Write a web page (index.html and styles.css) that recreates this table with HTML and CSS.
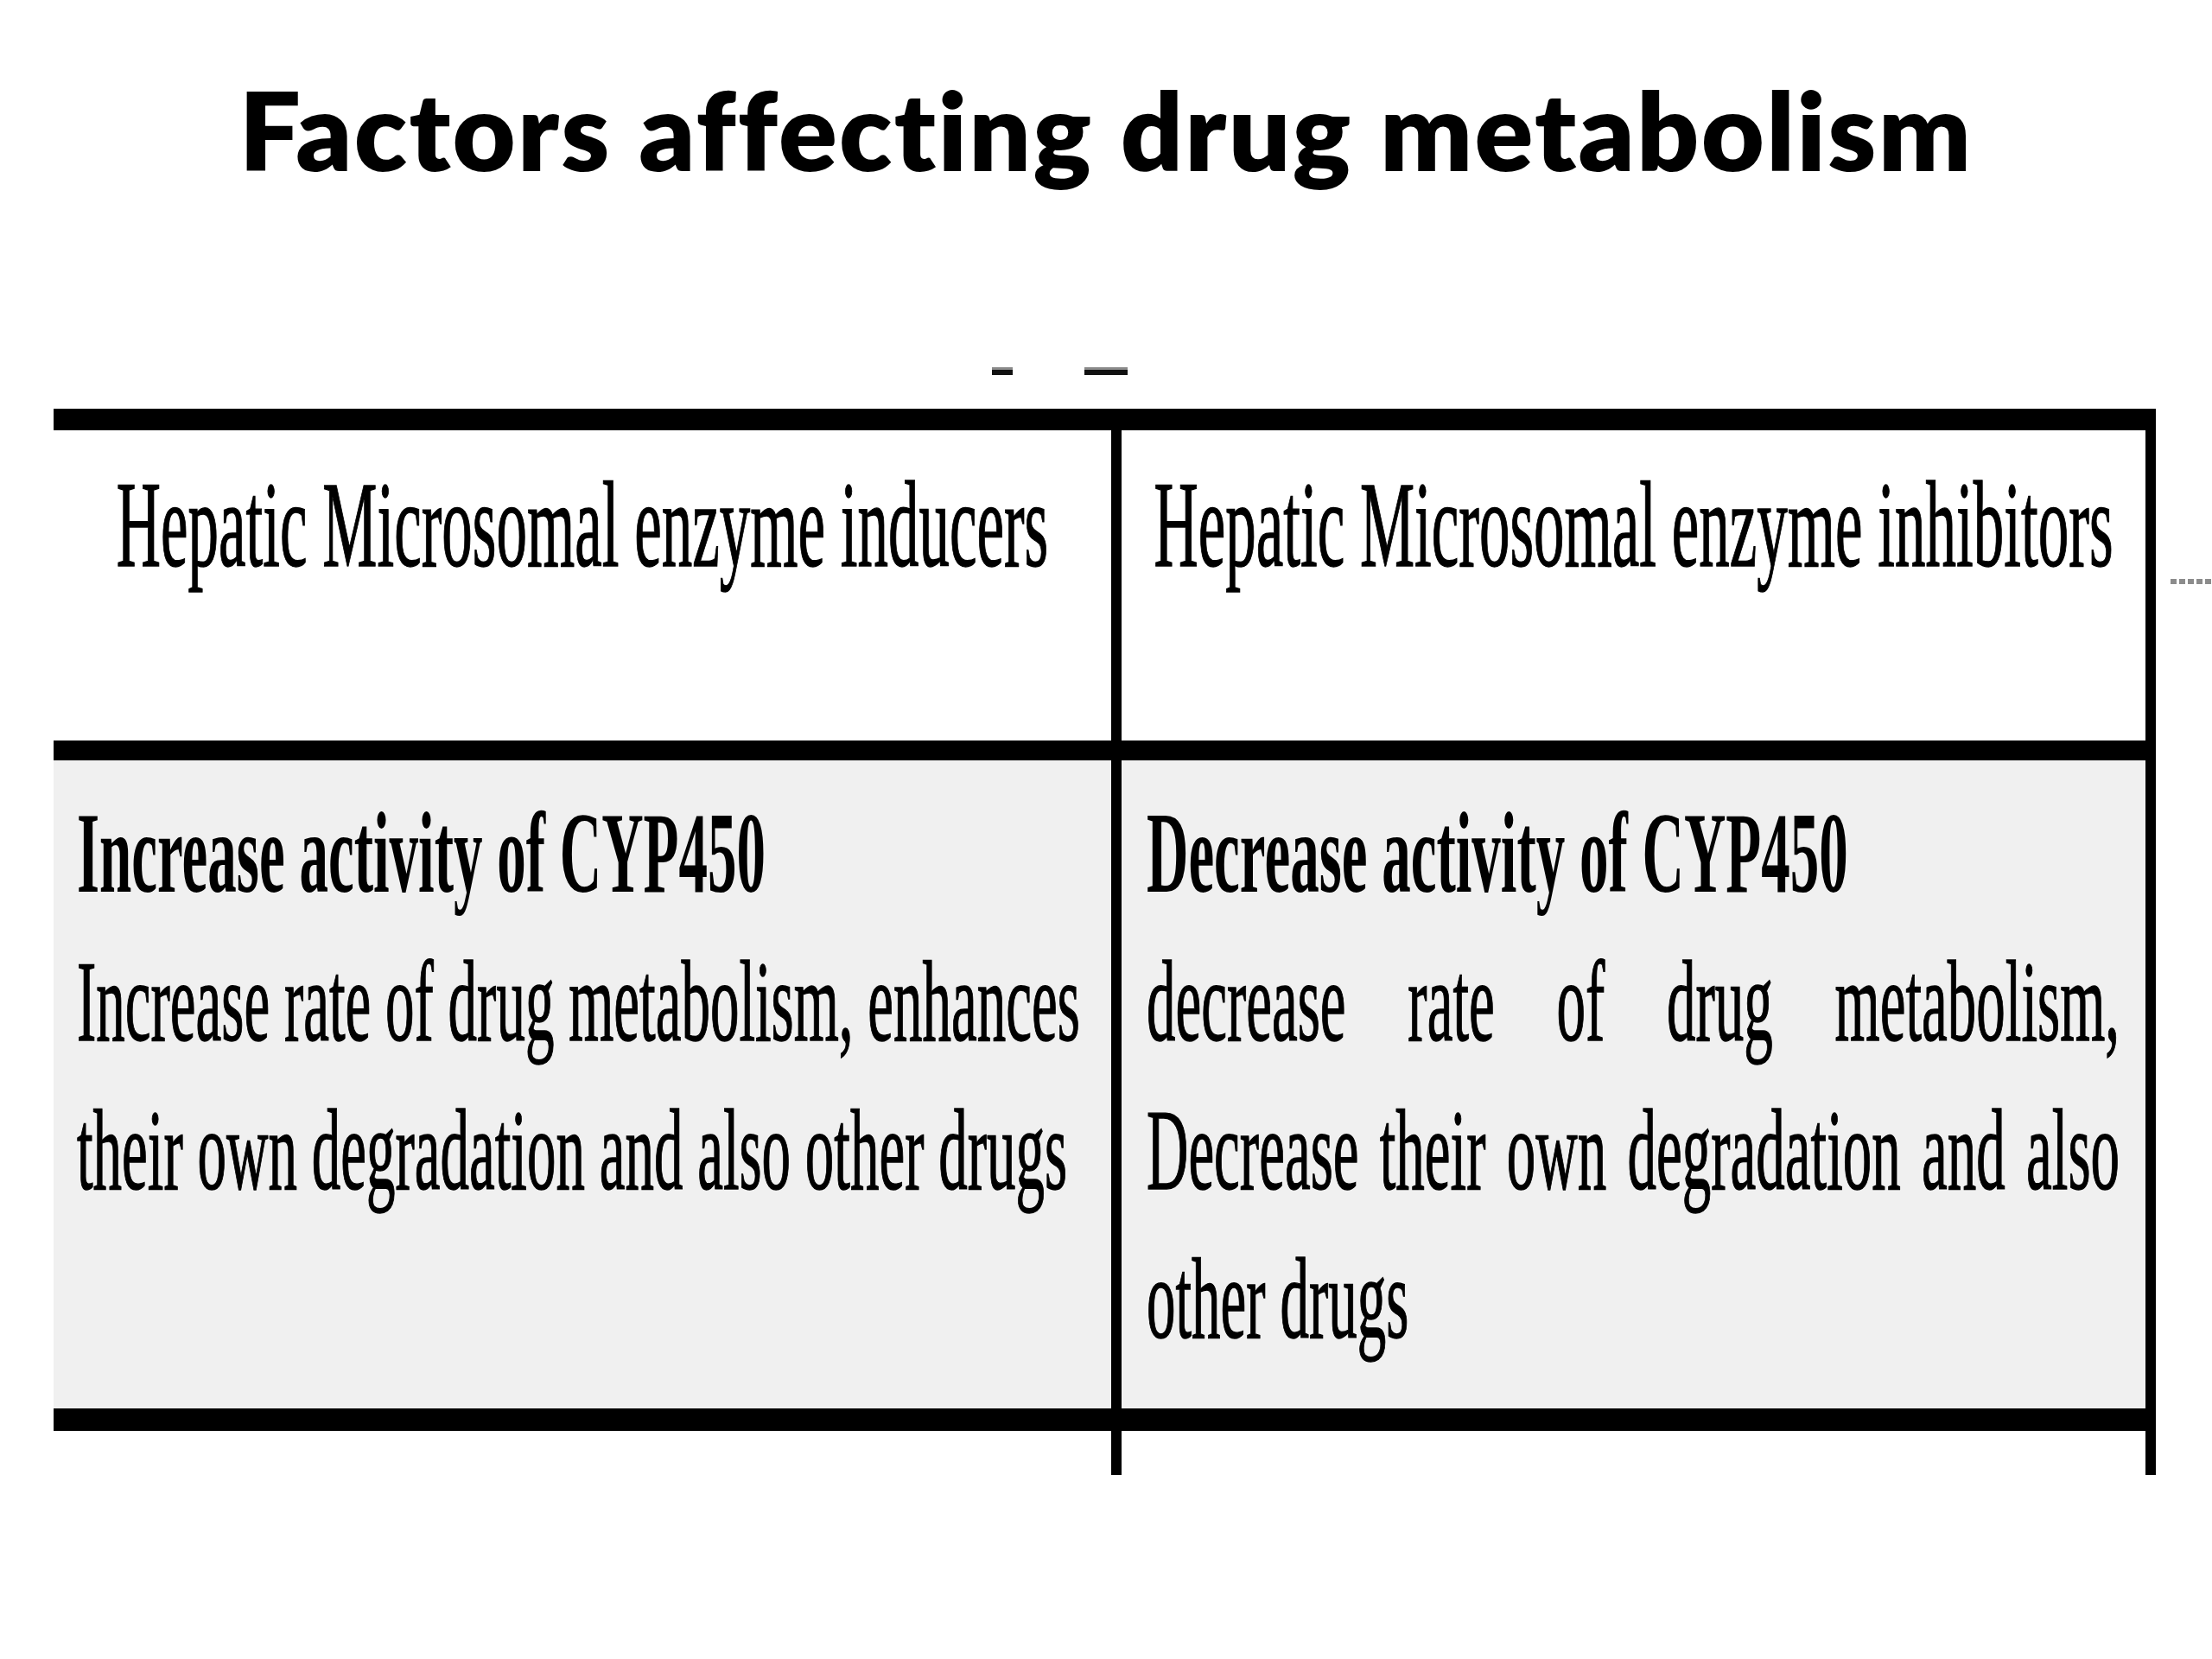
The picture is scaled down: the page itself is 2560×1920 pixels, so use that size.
FILE: index.html
```html
<!DOCTYPE html>
<html lang="en">
<head>
<meta charset="utf-8">
<title>Factors affecting drug metabolism</title>
<link rel="stylesheet" href="styles.css">
</head>
<body>
<div class="slide">
  <h1 class="title">Factors affecting drug metabolism</h1>
  <div class="marks"><span class="mark mark-a"></span><span class="mark mark-b"></span></div>
  <div class="table-wrap">
    <div class="table">
      <div class="row row-head">
        <div class="cell cell-left"><div class="scaled head-text head-left">Hepatic Microsomal enzyme inducers</div></div>
        <div class="cell cell-right"><div class="scaled head-text head-right">Hepatic Microsomal enzyme inhibitors</div></div>
      </div>
      <div class="row row-body">
        <div class="cell cell-left">
          <div class="scaled body-text body-left">
            <p class="lead">Increase activity of CYP450</p>
            <p>Increase rate of drug metabolism, enhances their own degradation and also other drugs</p>
          </div>
        </div>
        <div class="cell cell-right">
          <div class="scaled body-text body-right">
            <p class="lead">Decrease activity of CYP450</p>
            <p>decrease rate of drug metabolism, Decrease their own degradation and also other drugs</p>
          </div>
        </div>
      </div>
      <div class="row row-tail">
        <div class="cell cell-left"></div>
        <div class="cell cell-right"></div>
      </div>
    </div>
    <div class="side-dots"></div>
  </div>
</div>
</body>
</html>
```
FILE: styles.css
```css
html, body {
  margin: 0;
  padding: 0;
  background: #ffffff;
}

.slide {
  width: 2560px;
  height: 1920px;
  overflow: hidden;
  color: #000;
}

.title {
  margin: 0;
  padding-top: 74px;
  font-family: Lato, "Open Sans", "Liberation Sans", sans-serif;
  font-weight: 800;
  font-size: 126px;
  line-height: 151px;
  letter-spacing: 2.3px;
  font-variant-ligatures: none;
  font-feature-settings: "liga" 0, "dlig" 0;
  text-align: center;
  color: #000;
}

.marks {
  display: flex;
  height: 10px;
  margin-top: 200px;
  padding-left: 1148px;
  gap: 83px;
}

.mark {
  display: block;
  height: 6px;
  background: #111;
  border-top: 3px solid #8a8a8a;
}
.mark-a { width: 24px; }
.mark-b { width: 50px; }

.table-wrap {
  display: flex;
  align-items: flex-start;
  margin-top: 38px;
  padding-left: 62px;
}

.table {
  box-sizing: border-box;
  width: 2433px;
  flex: none;
  border-top: 25px solid #000;
  border-right: 12px solid #000;
}

.side-dots {
  flex: none;
  width: 48px;
  height: 6px;
  margin-top: 197px;
  margin-left: 17px;
  background: repeating-linear-gradient(90deg, #8c8c8c 0 7px, transparent 7px 10px);
}

.row {
  display: flex;
}

.row-head {
  height: 359px;
  border-bottom: 23px solid #000;
  background: #fff;
}

.row-body {
  height: 750px;
  border-bottom: 26px solid #000;
  background: #f0f0f0;
}

.row-tail {
  height: 51px;
  background: #fff;
}

.cell {
  box-sizing: border-box;
  min-width: 0;
  flex: none;
}

.cell-left {
  width: 1236px;
  border-right: 12px solid #000;
}

.cell-right {
  width: 1185px;
}

.row-head .cell {
  padding-top: 23px;
}

.row-body .cell-left {
  padding: 21px 0 0 27px;
}

.row-body .cell-right {
  padding: 21px 0 0 29px;
}

.scaled {
  transform: scaleX(0.5);
  transform-origin: 0 0;
  font-family: "Liberation Serif", "Times New Roman", serif;
  color: #000;
  -webkit-text-stroke: 1.4px #000;
}

.head-text {
  font-size: 142px;
  line-height: 172px;
  text-align: center;
  white-space: nowrap;
}

.head-left { width: 2448px; }
.head-right { width: 2370px; }

.body-text {
  font-size: 134px;
  line-height: 172px;
}

.body-text p {
  margin: 0;
}

.body-left {
  width: 2380px;
  text-align: left;
}

.body-right {
  width: 2252px;
  text-align: justify;
}

.lead {
  font-weight: 700;
  -webkit-text-stroke: 0;
}
```
